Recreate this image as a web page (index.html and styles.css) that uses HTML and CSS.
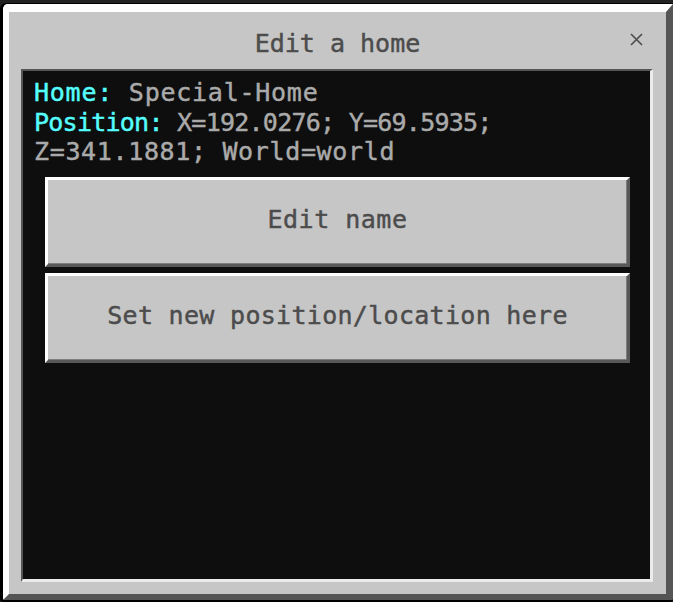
FILE: index.html
```html
<!DOCTYPE html>
<html>
<head>
<meta charset="utf-8">
<title>Edit a home</title>
<link rel="stylesheet" href="styles.css">
</head>
<body>
<div class="window">
  <div class="bevel">
    <div class="titlebar">
      <span class="title">Edit a home</span>
      <span class="close" aria-label="Close">
        <svg width="13" height="13" viewBox="0 0 13 13"><path d="M1 1 L12 12 M12 1 L1 12" stroke="#4c4c4c" stroke-width="1.6" fill="none"/></svg>
      </span>
    </div>
    <div class="panel">
      <div class="info">
        <div class="line line-1"><span class="key">Home:</span> <span class="val">Special-Home</span></div>
        <div class="line line-2"><span class="key">Position:</span> <span class="val">X=192.0276; Y=69.5935;</span></div>
        <div class="line line-3"><span class="val">Z=341.1881; World=world</span></div>
      </div>
      <div class="actions">
        <button class="btn btn-name">Edit name</button>
        <button class="btn btn-pos">Set new position/location here</button>
      </div>
    </div>
  </div>
</div>
</body>
</html>
```
FILE: styles.css
```css
* { box-sizing: border-box; }
html, body { margin: 0; padding: 0; }
body {
  width: 673px;
  height: 602px;
  overflow: hidden;
  background: #222222;
  font-family: "DejaVu Sans Mono", "Liberation Mono", monospace;
}
.window {
  margin-top: 3px;
  height: 599px;
  border-top: 1px solid #000;
  border-left: 3px solid #000;
  border-bottom: 2px solid #000;
  border-top-left-radius: 6px;
  border-bottom-left-radius: 4px;
  border-bottom-right-radius: 3px;
  overflow: hidden;
  background: #000;
}
.bevel {
  height: 100%;
  display: flex;
  flex-direction: column;
  background: #c6c6c6;
  border-top: 8px solid #ffffff;
  border-left: 6px solid #ffffff;
  border-right: 7px solid #555555;
  border-bottom: 6px solid #555555;
  border-top-left-radius: 5px;
}
.titlebar {
  position: relative;
  height: 57px;
  flex: none;
  display: flex;
  align-items: center;
  justify-content: center;
  padding-top: 6px;
}
.title {
  font-size: 25px;
  color: #4c4c4c;
  line-height: 29px;
  -webkit-text-stroke: 0.45px #4c4c4c;
}
.close {
  position: absolute;
  right: 23px;
  top: 21px;
  width: 13px;
  height: 13px;
  display: block;
}
.close svg { display: block; }
.panel {
  flex: 1;
  margin: 0 13px 12px 12px;
  background: #0e0e0e;
  border-top: 2px solid #555555;
  border-left: 2px solid #555555;
  border-right: 3px solid #ebebeb;
  border-bottom: 3px solid #ebebeb;
  padding: 7px 0 0 11px;
}
.info {
  font-size: 25px;
  line-height: 29.5px;
  white-space: nowrap;
}
.line { display: block; }
.line-1 { letter-spacing: 0.75px; }
.line-2 { letter-spacing: -0.75px; }
.line-3 { letter-spacing: 0.65px; }
.key { color: #55ffff; -webkit-text-stroke: 0.45px #55ffff; }
.val { color: #aaaaaa; -webkit-text-stroke: 0.45px #aaaaaa; }
.actions {
  margin: 10px 20px 0 11px;
  display: flex;
  flex-direction: column;
  gap: 6px;
}
.btn {
  height: 90px;
  width: 100%;
  background: #c6c6c6;
  border-top: 3px solid #ffffff;
  border-left: 3px solid #ffffff;
  border-right: 3px solid #585858;
  border-bottom: 3px solid #585858;
  box-shadow: inset -1px -1px 0 #7d7d7d;
  padding: 0 0 4px 0;
  font-family: "DejaVu Sans Mono", "Liberation Mono", monospace;
  font-size: 25px;
  color: #4c4c4c;
  -webkit-text-stroke: 0.45px #4c4c4c;
  display: flex;
  align-items: center;
  justify-content: center;
}
.btn-name { letter-spacing: 0.5px; }
.btn-pos { letter-spacing: 0.3px; }
```
